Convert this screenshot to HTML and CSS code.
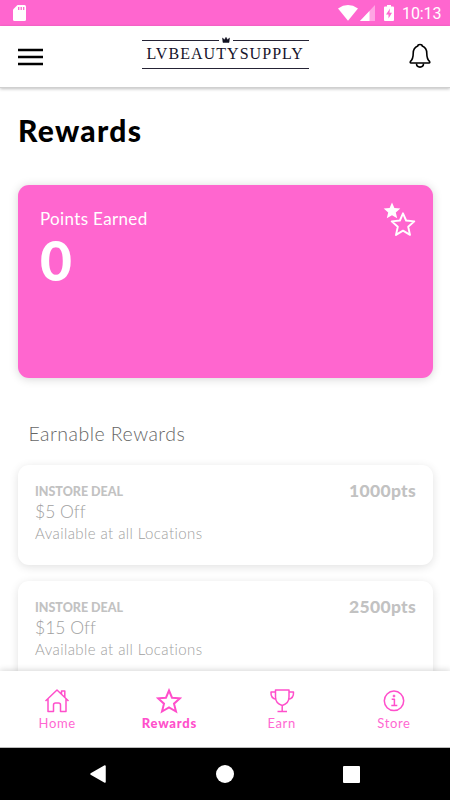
FILE: index.html
```html
<!DOCTYPE html>
<html lang="en">
<head>
<meta charset="utf-8">
<title>Rewards</title>
<link rel="stylesheet" href="styles.css">
</head>
<body>
<div class="screen">
  <div class="status">
    <svg class="sd" width="13" height="16" viewBox="0 0 13 16"><path d="M4.500 0H11.500Q13 0 13 1.500V14.500Q13 16 11.500 16H1.500Q0 16 0 14.500V4.500Z" fill="#fff"/><path d="M5.700 2v3M8.200 2v3M10.700 2v3" stroke="#ff66cf" stroke-width="1.300"/></svg>
    <div class="status-right">
      <svg class="wifi" width="20" height="16" viewBox="0 0 20 16"><path d="M0 3.500Q10-3.300 20 3.500L10 15.700Z" fill="#fff"/></svg>
      <svg class="signal" width="15" height="16" viewBox="0 0 15 16"><path d="M15 0V16H0Z" fill="#ffa5e3"/><path d="M9.500 6V16H0Z" fill="#fff"/></svg>
      <svg class="battery" width="10" height="16" viewBox="0 0 10 16"><path d="M3 0H7V1.500H9Q10 1.500 10 2.500V15Q10 16 9 16H1Q0 16 0 15V2.500Q0 1.500 1 1.500H3Z" fill="#fff"/><path d="M6 3.500 2 9.500H4.500V13.500L8 7.700H5.500Z" fill="#ff66cf"/></svg>
      <span class="clock">10:13</span>
    </div>
  </div>
  <header class="header">
    <svg class="menu" width="25" height="18" viewBox="0 0 25 18"><path d="M0 2H25M0 9H25M0 16H25" stroke="#000" stroke-width="2.600"/></svg>
    <div class="logo">
      <svg width="167" height="7" viewBox="0 0 167 7"><path d="M0 3.500H77M91 3.500H167" stroke="#252335" stroke-width="1.200"/><path d="M80.500 1 82.500 2.800 84 .3 85.500 2.800 87.500 1 87 5.500H81Z" fill="#111020" stroke="#111020" stroke-width=".5"/></svg>
      <span class="logo-text">LVBEAUTYSUPPLY</span>
    </div>
    <svg class="bell" width="22" height="26" viewBox="0 0 22 26" fill="none" stroke="#000" stroke-width="1.600" stroke-linejoin="round"><path d="M8.800 3Q8.800 1.500 11 1.500T13.200 3C16.500 4.200 17.800 7 17.800 10.500C17.800 15.500 19 17 20.500 18.300Q21.300 20 20 20H2Q.7 20 1.500 18.300C3 17 4.200 15.500 4.200 10.500C4.200 7 5.500 4.200 8.800 3Z"/><path d="M7.500 20.500C7.500 25.300 14.500 25.300 14.500 20.500"/></svg>
  </header>
  <main class="content">
    <h1 class="title">Rewards</h1>
    <section class="points">
      <div>
        <div class="points-label">Points Earned</div>
        <div class="points-value">0</div>
      </div>
      <svg class="stars" width="34" height="36" viewBox="0 0 34 36"><path d="M9 .5 11.400 6 17.300 6.600 12.800 10.500 14.200 16.300 9 13.300 3.800 16.300 5.200 10.500.7 6.600 6.600 6Z" fill="#fff"/><path d="M20 11.300 23.100 18.500 31.300 19.400 25.200 24.800 27 32.900 20 28.600 13 32.900 14.800 24.800 8.700 19.400 16.900 18.500Z" fill="#ff66cf" stroke="#fff" stroke-width="1.900" stroke-linejoin="round"/></svg>
    </section>
    <h2 class="subtitle">Earnable Rewards</h2>
    <section class="card">
      <div>
        <div class="kind">INSTORE DEAL</div>
        <div class="offer">$5 Off</div>
        <div class="where">Available at all Locations</div>
      </div>
      <div class="cost">1000pts</div>
    </section>
    <section class="card">
      <div>
        <div class="kind">INSTORE DEAL</div>
        <div class="offer">$15 Off</div>
        <div class="where">Available at all Locations</div>
      </div>
      <div class="cost">2500pts</div>
    </section>
  </main>
  <nav class="tabs">
    <div class="tab"><svg width="26" height="26" viewBox="0 0 26 26"><path d="M1.500 13 13 2 24.500 13M4 11V23.500H9.500V17Q9.500 15 11.500 15H14.500Q16.500 15 16.500 17V23.500H22V11M17.500 6V3H20.800V9"/></svg><span>Home</span></div>
    <div class="tab active"><svg width="26" height="26" viewBox="0 0 26 26"><path d="M13 2.500 16 9.700 24 10.300 18 15.700 20 23.500 13 19.300 6 23.500 8 15.700 2 10.300 10 9.700Z"/></svg><span>Rewards</span></div>
    <div class="tab"><svg width="26" height="26" viewBox="0 0 26 26"><path d="M6.500 2H20V9Q20 15.500 13.200 17.500Q6.500 15.500 6.500 9ZM6.500 4H2Q1.500 10.500 7.500 11.500M20 4H24.500Q25 10.500 19 11.500M13.200 17.500V23.500M8.500 23.500H18"/></svg><span>Earn</span></div>
    <div class="tab"><svg width="26" height="26" viewBox="0 0 26 26"><circle cx="13" cy="12.800" r="9.700"/><circle cx="13" cy="8" r="1" fill="#ff4fcb" stroke-width=".8"/><path d="M10.700 11.300H13.400V17.500M10.300 17.500H16.300"/></svg><span>Store</span></div>
  </nav>
  <div class="system">
    <svg width="16" height="18" viewBox="0 0 16 18"><path d="M15 1V17L1 9Z" fill="#fff" stroke="#fff" stroke-width="1.500" stroke-linejoin="round"/></svg>
    <span class="circle"></span>
    <span class="square"></span>
  </div>
</div>
</body>
</html>
```
FILE: styles.css
```css
* { box-sizing: border-box; }
body { margin: 0; background: #fff; font-family: Lato, "Liberation Sans", sans-serif; font-variant-ligatures: none; }
.screen { width: 450px; height: 800px; display: flex; flex-direction: column; overflow: hidden; }
.status { height: 26px; flex: none; background: #ff66cf; display: flex; justify-content: space-between; padding: 5px 9px 0 13px; }
.status-right { display: flex; }
.signal { margin-left: 2px; }
.battery { margin-left: 9px; }
.clock { width: 39px; margin-left: 8px; font: 400 16px/18px Roboto, sans-serif; color: #fff; white-space: nowrap; letter-spacing: -.1px; }
.header { height: 62px; flex: none; background: #fff; border-bottom: 1px solid #d0d0d0; box-shadow: 0 1px 3px rgba(0,0,0,.25); display: flex; justify-content: space-between; padding: 0 19px 0 18px; z-index: 1; }
.menu { margin-top: 22px; }
.bell { margin-top: 17px; }
.logo { width: 167px; height: 32px; margin: 11px 2px 0 0; border-bottom: 1px solid #252335; display: flex; flex-direction: column; }
.logo-text { font: 16px/20px "Liberation Serif", serif; color: #15132b; letter-spacing: 1.050px; padding-left: 5px; white-space: nowrap; }
.content { flex: 1; min-height: 0; overflow: hidden; padding: 0 17px 0 18px; }
.title { margin: 24px 0 0; font-size: 30px; line-height: 36px; font-weight: 900; color: #000; letter-spacing: 1.300px; }
.points { height: 193px; margin-top: 37px; border-radius: 11px; background: #ff66cf; color: #fff; padding: 23px 16px 0 22px; display: flex; justify-content: space-between; box-shadow: 0 1px 10px rgba(0,0,0,.17); }
.points-label { font-size: 17px; line-height: 21px; font-weight: 400; letter-spacing: .35px; }
.points-value { font-size: 55px; line-height: 62px; font-weight: 900; }
.stars { margin-top: -6px; }
.subtitle { margin: 44px 0 0 10.500px; font-size: 19.500px; line-height: 24px; font-weight: 300; color: #666; letter-spacing: .470px; }
.card { height: 100px; margin-top: 19px; padding: 17px 17px 0 17px; border-radius: 11px; background: #fff; box-shadow: 0 2px 10px rgba(0,0,0,.12); display: flex; justify-content: space-between; color: #b8b8b8; }
.card + .card { margin-top: 16px; }
.kind { font-size: 12.500px; line-height: 20px; font-weight: 900; color: #c2c2c2; }
.offer { font-size: 17.500px; line-height: 20px; font-weight: 300; color: #a0a0a0; }
.where { font-size: 15px; line-height: 22px; font-weight: 300; color: #a0a0a0; letter-spacing: .420px; }
.cost { font-size: 17.500px; line-height: 18px; font-weight: 900; color: #c2c2c2; letter-spacing: .300px; }
.tabs { height: 77px; flex: none; background: #fff; border-bottom: 1px solid #bbb; box-shadow: 0 -1px 6px rgba(0,0,0,.16); display: grid; grid-template-columns: repeat(4, 1fr); padding: 17px 0 0 1px; z-index: 1; }
.tab { display: flex; flex-direction: column; align-items: center; font-size: 13px; line-height: 19px; font-weight: 400; color: #ff68d2; letter-spacing: .6px; }
.tab svg { fill: none; stroke: #ff4fcb; stroke-width: 1.500; stroke-linejoin: round; }
.tab.active { font-weight: 900; color: #ff4fcb; letter-spacing: .750px; }
.tab.active svg { stroke-width: 2; stroke-linejoin: miter; }
.system { height: 52px; flex: none; background: #000; display: flex; align-items: center; justify-content: center; gap: 109.500px; }
.circle { width: 18px; height: 18px; border-radius: 50%; background: #fff; }
.square { width: 17px; height: 17px; border-radius: 1px; background: #fff; }
```
